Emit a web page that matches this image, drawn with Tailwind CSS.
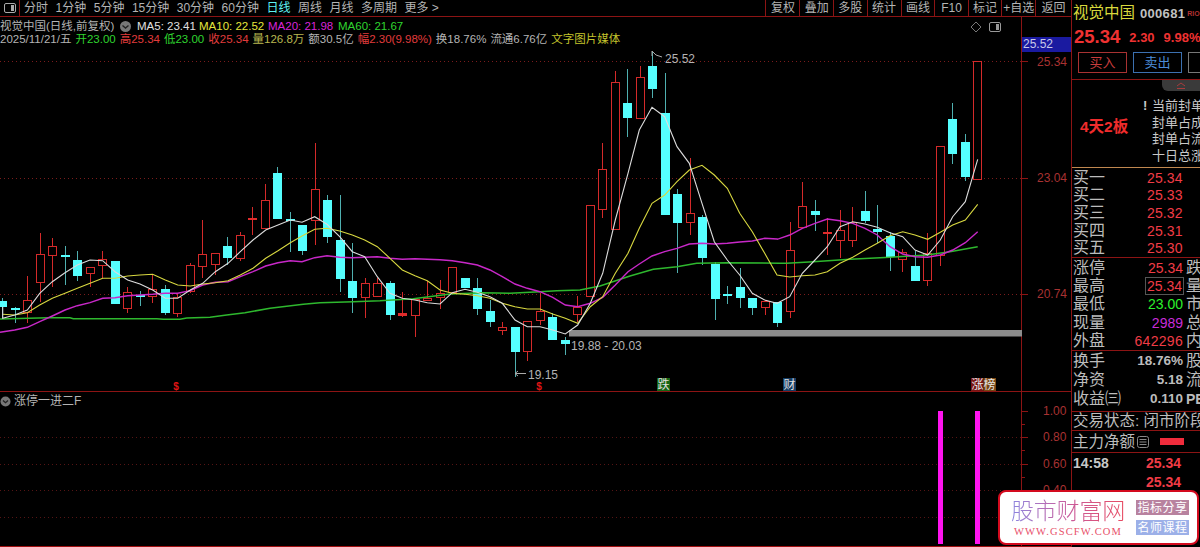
<!DOCTYPE html>
<html lang="zh">
<head>
    <meta charset="UTF-8">
    <title>视觉中国 日线</title>
    <script src="https://cdn.jsdelivr.net/npm/@tailwindcss/browser@4"></script>
</head>
<body class="bg-black">
    <div class="relative flex h-[547px] w-[1200px] overflow-hidden bg-black text-[12px] leading-none text-[#c8c8c8] font-['Liberation_Sans','Noto_Sans_CJK_SC',sans-serif]">
        <!-- Left: toolbar + charts -->
        <div class="flex w-[1071px] flex-col">
            <!-- Toolbar -->
            <div class="flex h-[17px] shrink-0 items-center justify-between border-b border-[#8c1414]">
                <div class="flex h-full items-center">
                    <div class="flex h-full w-5 items-center justify-center border-r border-[#8c1414]">
                        <svg width="12" height="10" viewBox="0 0 12 10"><rect x="0.5" y="0.5" width="11" height="9" rx="1.5" fill="none" stroke="#aaa"/><rect x="7" y="2" width="3" height="6" fill="#aaa"/></svg>
                    </div>
                    <div class="ml-1 flex items-center gap-[7.5px] text-[#b4b4b4]">
                        <span>分时</span><span>1分钟</span><span>5分钟</span><span>15分钟</span><span>30分钟</span><span>60分钟</span>
                        <span class="text-[#5ef2f2]">日线</span><span>周线</span><span>月线</span><span>多周期</span><span>更多 &gt;</span>
                    </div>
                </div>
                <div class="flex h-full items-center text-center text-[#b4b4b4]">
                    <span class="flex h-full w-[34px] items-center justify-center border-l border-[#8c1414]">复权</span>
                    <span class="flex h-full w-[33.6px] items-center justify-center border-l border-[#8c1414]">叠加</span>
                    <span class="flex h-full w-[33.6px] items-center justify-center border-l border-[#8c1414]">多股</span>
                    <span class="flex h-full w-[34px] items-center justify-center border-l border-[#8c1414]">统计</span>
                    <span class="flex h-full w-[33.6px] items-center justify-center border-l border-[#8c1414]">画线</span>
                    <span class="flex h-full w-[33.6px] items-center justify-center border-l border-[#8c1414]">F10</span>
                    <span class="flex h-full w-[33.6px] items-center justify-center border-l border-[#8c1414]">标记</span>
                    <span class="flex h-full w-[33.6px] items-center justify-center border-l border-[#8c1414]">+自选</span>
                    <span class="flex h-full w-[36px] items-center justify-center border-l border-[#8c1414]">返回</span>
                </div>
            </div>

            <!-- Price chart -->
            <div class="flex h-[375px] shrink-0 border-b border-[#8c1414]">
                <div class="relative w-[1022px] border-r border-[#8c1414]">
                    <svg id="priceChart" class="absolute inset-0" width="1022" height="374" viewBox="0 17 1022 374"></svg>
                    <div class="absolute right-[20px] top-[4px] flex items-center gap-[7px]">
                        <svg width="12" height="12" viewBox="0 0 12 12"><path d="M6 1l5 5-5 5-5-5z" fill="none" stroke="#777"/></svg>
                        <svg width="12" height="10" viewBox="0 0 12 10"><rect x="0.5" y="0.5" width="11" height="9" rx="1.5" fill="none" stroke="#999"/><rect x="7" y="2" width="3" height="6" fill="#999"/></svg>
                    </div>
                    <div class="relative pt-[3px] text-[11.5px]">
                        <div class="flex h-[13px] items-center whitespace-nowrap">
                            <span class="w-[119px] shrink-0 text-[#b4b4b4]">视觉中国(日线,前复权)</span>
                            <svg class="shrink-0" width="13" height="13" viewBox="0 0 13 13"><circle cx="6.5" cy="6.5" r="5.5" fill="#777"/><path d="M3.5 5.5l3 2.5 3-2.5" fill="none" stroke="#222" stroke-width="1.4"/></svg>
                            <span class="ml-[5px] w-[62px] text-[#e0e0e0]">MA5: 23.41</span>
                            <span class="w-[69px] text-[#e6e63c]">MA10: 22.52</span>
                            <span class="w-[70px] text-[#d824d8]">MA20: 21.98</span>
                            <span class="text-[#2fd42f]">MA60: 21.67</span>
                        </div>
                        <div class="flex h-[13px] items-center gap-[4px] whitespace-nowrap">
                            <span class="text-[#b4b4b4]">2025/11/21/五</span>
                            <span class="text-[#2fd42f]">开23.00</span>
                            <span class="text-[#e03c3c]">高25.34</span>
                            <span class="text-[#2fd42f]">低23.00</span>
                            <span class="text-[#e03c3c]">收25.34</span>
                            <span class="text-[#b8b850]">量126.8万</span>
                            <span class="text-[#b4b4b4]">额30.5亿</span>
                            <span class="text-[#e03c3c]">幅2.30(9.98%)</span>
                            <span class="text-[#b4b4b4]">换18.76%</span>
                            <span class="text-[#b4b4b4]">流通6.76亿</span>
                            <span class="text-[#c4c42c]">文字图片媒体</span>
                        </div>
                    </div>
                </div>
                <!-- Price axis -->
                <div class="relative w-[49px] text-[12px] text-[#a83232]">
                    <div class="absolute left-0 top-[20px] h-[15px] w-[49px] bg-[#1a1aa0] pl-[1px] text-[12px] leading-[15px] text-[#c8c8e8]">25.52</div>
                    <span class="absolute left-[15px] top-[39px]">25.34</span>
                    <span class="absolute left-[15px] top-[155px]">23.04</span>
                    <span class="absolute left-[15px] top-[271px]">20.74</span>
                    <span class="absolute left-0 top-[44px] h-px w-[6px] bg-[#8c1414]"></span>
                    <span class="absolute left-0 top-[161px] h-px w-[6px] bg-[#8c1414]"></span>
                    <span class="absolute left-0 top-[277px] h-px w-[6px] bg-[#8c1414]"></span>
                </div>
            </div>

            <!-- Indicator panel -->
            <div class="flex min-h-0 flex-1 border-b border-[#a01010]">
                <div class="relative w-[1022px] border-r border-[#8c1414]">
                    <svg id="lowerChart" class="absolute inset-0" width="1022" height="155" viewBox="0 392 1022 155"></svg>
                    <div class="relative flex h-[16px] items-center pt-[2px] text-[#b4b4b4]">
                        <svg width="11" height="11" viewBox="0 0 11 11"><circle cx="5.5" cy="5.5" r="5" fill="#777"/><path d="M3 4.5l2.5 2.2L8 4.5" fill="none" stroke="#222" stroke-width="1.3"/></svg>
                        <span class="ml-[3px]">涨停一进二F</span>
                    </div>
                </div>
                <div class="relative w-[49px] text-[12px] text-[#a83232]">
                    <span class="absolute left-[21px] top-[13px]">1.00</span>
                    <span class="absolute left-[21px] top-[39px]">0.80</span>
                    <span class="absolute left-[21px] top-[66px]">0.60</span>
                    <span class="absolute left-[21px] top-[92px]">0.40</span>
                    <span class="absolute left-0 top-[19px] h-px w-[6px] bg-[#8c1414]"></span>
                    <span class="absolute left-0 top-[32px] h-px w-[3px] bg-[#8c1414]"></span>
                    <span class="absolute left-0 top-[45px] h-px w-[6px] bg-[#8c1414]"></span>
                    <span class="absolute left-0 top-[58px] h-px w-[3px] bg-[#8c1414]"></span>
                    <span class="absolute left-0 top-[72px] h-px w-[6px] bg-[#8c1414]"></span>
                    <span class="absolute left-0 top-[85px] h-px w-[3px] bg-[#8c1414]"></span>
                </div>
            </div>
        </div>

        <!-- Right: quote panel -->
        <div class="flex w-[129px] flex-col overflow-hidden border-l border-[#8c1414] text-[16px] text-[#bcbcbc]">
            <div class="h-[80px] shrink-0 border-b border-[#8c1414]">
                <div class="flex h-[24px] items-center whitespace-nowrap pl-[1px] pt-[2px]">
                    <span class="shrink-0 text-[15.5px] text-[#d8d83c]">视觉中国</span>
                    <span class="ml-[5px] text-[13px] font-bold tracking-[0.3px] text-[#c0c0c0]">000681</span>
                    <span class="ml-[2px] text-[7px] font-bold text-[#b03030]">RIO</span>
                </div>
                <div class="flex h-[23px] items-center whitespace-nowrap pl-[2px] pt-[3px] font-bold text-[#f03232]">
                    <span class="text-[18.5px]">25.34</span>
                    <span class="ml-[9px] text-[13px]">2.30</span>
                    <span class="ml-[9px] text-[13px]">9.98%</span>
                </div>
                <div class="mt-[5px] flex gap-[6px] pl-[6px] text-[13px]">
                    <span class="flex h-[21px] w-[49px] shrink-0 items-center justify-center border border-[#a83232] text-[#c83c3c]">买入</span>
                    <span class="flex h-[21px] w-[49px] shrink-0 items-center justify-center border border-[#3c70b0] text-[#4c8cd8]">卖出</span>
                    <span class="h-[21px] w-[49px] shrink-0 border border-[#777]"></span>
                </div>
            </div>
            <div class="relative flex h-[88px] shrink-0 border-b border-[#c08850]">
                <div class="absolute right-0 top-0 flex h-[11px] w-[38px] items-center justify-center rounded-bl-[6px] bg-[#3a3a3a]">
                    <svg width="10" height="7" viewBox="0 0 10 7"><path d="M1 4l4-3 4 3M1 6.5h8" fill="none" stroke="#a83c3c"/></svg>
                </div>
                <span class="ml-[8px] mt-[39px] h-[18px] w-[63px] shrink-0 whitespace-nowrap text-[15.5px] font-bold text-[#f02c2c]">4天2板</span>
                <span class="mt-[19px] w-[9px] shrink-0 text-[13px] font-bold leading-[13px] text-[#c8c8c8]">!</span>
                <div class="mt-[19px] flex flex-col gap-[3px] whitespace-nowrap text-[13px] leading-[13.5px] text-[#c8c8c8]">
                    <span>当前封单额</span><span>封单占成交</span><span>封单占流通</span><span>十日总涨幅</span>
                </div>
            </div>

            <div class="grid h-[90px] shrink-0 grid-rows-5 border-b border-[#8c1414] pt-[1px]">
                <div class="flex items-center whitespace-nowrap pl-[1px]"><span class="w-[74px]">买一</span><span class="text-[14px] tracking-[0.1px] text-[#f03c46]">25.34</span></div>
                <div class="flex items-center whitespace-nowrap pl-[1px]"><span class="w-[74px]">买二</span><span class="text-[14px] tracking-[0.1px] text-[#f03c46]">25.33</span></div>
                <div class="flex items-center whitespace-nowrap pl-[1px]"><span class="w-[74px]">买三</span><span class="text-[14px] tracking-[0.1px] text-[#f03c46]">25.32</span></div>
                <div class="flex items-center whitespace-nowrap pl-[1px]"><span class="w-[74px]">买四</span><span class="text-[14px] tracking-[0.1px] text-[#f03c46]">25.31</span></div>
                <div class="flex items-center whitespace-nowrap pl-[1px]"><span class="w-[74px]">买五</span><span class="text-[14px] tracking-[0.1px] text-[#f03c46]">25.30</span></div>
            </div>

            <div class="grid h-[93px] shrink-0 grid-rows-5 border-b border-[#8c1414] pt-[1px]">
                <div class="flex items-center whitespace-nowrap pl-[1px]"><span class="w-[40px]">涨停</span><span class="w-[70px] text-right text-[14px] text-[#f03c46]">25.34</span><span class="ml-[3px]">跌</span></div>
                <div class="flex items-center whitespace-nowrap pl-[1px]"><span class="w-[40px]">最高</span><span class="flex w-[71px] justify-end"><span class="border border-[#555] px-[1px] text-[14px] leading-[16px] text-[#f03c46]">25.34</span></span><span class="ml-[2px]">量</span></div>
                <div class="flex items-center whitespace-nowrap pl-[1px]"><span class="w-[40px]">最低</span><span class="w-[70px] text-right text-[14px] text-[#2cf02c]">23.00</span><span class="ml-[3px]">市</span></div>
                <div class="flex items-center whitespace-nowrap pl-[1px]"><span class="w-[40px]">现量</span><span class="w-[70px] text-right text-[14px] text-[#c82cd8]">2989</span><span class="ml-[3px]">总</span></div>
                <div class="flex items-center whitespace-nowrap pl-[1px]"><span class="w-[40px]">外盘</span><span class="w-[70px] text-right text-[14px] tracking-[0.3px] text-[#f03c46]">642296</span><span class="ml-[3px]">内</span></div>
            </div>

            <div class="grid h-[61px] shrink-0 grid-rows-3 border-b border-[#8c1414] pb-[3px]">
                <div class="flex items-center whitespace-nowrap pl-[1px]"><span class="w-[40px]">换手</span><span class="w-[70px] text-right text-[13.5px] font-bold">18.76%</span><span class="ml-[3px]">股</span></div>
                <div class="flex items-center whitespace-nowrap pl-[1px]"><span class="w-[40px]">净资</span><span class="w-[70px] text-right text-[13.5px] font-bold">5.18</span><span class="ml-[3px]">流</span></div>
                <div class="flex items-center whitespace-nowrap pl-[1px]"><span class="w-[48px]">收益㈢</span><span class="w-[62px] text-right text-[13.5px] font-bold">0.110</span><span class="ml-[3px] text-[14px] font-bold">PE</span></div>
            </div>
            <div class="flex h-[19px] shrink-0 items-center whitespace-nowrap border-b border-[#8c1414] pl-[1px] text-[15.5px]">交易状态: 闭市阶段</div>
            <div class="flex h-[22px] shrink-0 items-center border-b border-[#8c1414] pl-[1px]">
                <span class="whitespace-nowrap text-[15.5px]">主力净额</span>
                <svg class="ml-[2px] shrink-0" width="12" height="12" viewBox="0 0 12 12"><rect x="0.5" y="0.5" width="11" height="11" rx="2" fill="none" stroke="#888"/><path d="M2.5 3.5h7M2.5 6h7M2.5 8.5h7" stroke="#888"/></svg>
                <span class="ml-[11px] h-[7px] w-[24px] shrink-0 bg-[#f02c3c]"></span>
            </div>
            <div class="flex flex-col pl-[1px] text-[14px] font-bold">
                <div class="flex h-[20px] items-center"><span class="w-[73px] text-[#c8c8c8]">14:58</span><span class="text-[#f03c46]">25.34</span></div>
                <div class="flex h-[17px] items-center"><span class="w-[73px]"></span><span class="text-[#f03c46]">25.34</span></div>
            </div>
        </div>

        <!-- Watermark logo -->
        <div class="absolute left-[998px] top-[490px] flex h-[55px] w-[201px] items-center rounded-lg border-2 border-[#d40a1e] bg-white">
            <div class="ml-[12px] flex w-[112px] flex-col items-center">
                <span class="whitespace-nowrap bg-linear-to-r from-[#8a84e0] via-[#c85a9c] to-[#e84a60] bg-clip-text text-[23px] leading-[26px] font-[200] tracking-[-0.2px] text-transparent">股市财富网</span>
                <span class="mt-[3px] whitespace-nowrap font-['Liberation_Serif',serif] text-[10.5px] tracking-[1.15px] text-[#e8506a]">WWW.GSCFW.COM</span>
            </div>
            <div class="ml-[12px] flex flex-col gap-[5px] text-[12px] tracking-[0.5px]">
                <span class="flex h-[15px] w-[53px] items-center justify-center whitespace-nowrap bg-[#b8829f] text-white">指标分享</span>
                <span class="flex h-[15px] w-[53px] items-center justify-center whitespace-nowrap bg-[#9cb0e8] text-white">名师课程</span>
            </div>
        </div>
    </div>

    <script>
        const NS = 'http://www.w3.org/2000/svg';
        const price = document.getElementById('priceChart');
        const lower = document.getElementById('lowerChart');

        function el(svg, tag, attrs, text) {
            const n = document.createElementNS(NS, tag);
            for (const k in attrs) n.setAttribute(k, attrs[k]);
            if (text) n.textContent = text;
            svg.appendChild(n);
            return n;
        }

        // dotted price levels
        [61.5, 178.5, 294.5].forEach(y => el(price, 'line', { x1: 0, x2: 1022, y1: y, y2: y, stroke: '#7a1c1c', 'stroke-dasharray': '1 3' }));
        [437.5, 464.5, 490.5, 517.5].forEach(y => el(lower, 'line', { x1: 0, x2: 1022, y1: y, y2: y, stroke: '#551414', 'stroke-dasharray': '1 3' }));

        // gray support band
        el(price, 'rect', { x: 569, y: 330, width: 453, height: 6.5, fill: '#8c8c8c' });

        // type, body top, body bottom, wick top, wick bottom (one row per day)
        const candles = [
            ['c',301,307,298,318],['c',308,310,307,323],['r',300,313,276,323],['r',254,283,233,302],['r',246,256,238,287],
            ['c',255,257,246,285],['c',260,276,251,281],['r',267,274,267,287],['r',259,266,251,278],['c',261,304,261,304],
            ['r',292,309,287,313],['c',295,297,291,306],['r',289,297,275,303],['c',289,313,285,315],['r',297,314,293,317],
            ['r',265,292,263,293],['r',254,267,220,278],['r',253,265,253,275],['c',246,258,237,265],['r',235,259,232,261],
            ['d',218,220,207,235],['r',200,229,184,229],['c',173,219,167,219],['c',219,221,212,252],['c',225,251,225,255],
            ['r',189,221,143,245],['c',200,237,195,243],['c',240,279,195,292],['c',281,298,243,313],['r',283,298,278,318],
            ['r',283,297,278,297],['c',283,315,281,320],['d',313,316,292,317],['r',299,316,298,337],['r',298,301,281,301],
            ['r',293,298,280,309],['r',267,293,267,293],['c',278,288,278,288],['c',288,309,278,315],['c',311,322,300,327],
            ['r',327,331,322,335],['c',327,352,327,377],['r',321,352,321,361],['r',311,321,293,325],['c',317,340,313,340],
            ['c',340,344,337,355],['r',307,315,296,322],['r',205,297,205,297],['r',169,210,143,218],['r',82,230,71,230],
            ['c',103,118,69,137],['r',77,119,66,119],['c',66,89,52,98],['c',113,215,73,215],['c',194,223,189,273],
            ['r',213,223,158,235],['c',217,258,215,265],['c',264,299,262,320],['c',294,296,286,304],['c',287,298,268,308],
            ['c',298,308,298,315],['r',301,308,300,315],['c',302,323,302,327],['r',250,312,222,318],['r',206,228,182,228],
            ['c',211,215,200,231],['d',232,234,218,255],['r',230,241,210,258],['r',222,241,207,247],['c',211,221,191,223],
            ['c',229,232,205,243],['c',236,257,232,271],['r',252,260,249,272],['c',266,281,251,281],['r',253,281,233,286],
            ['r',146,256,146,266],['c',119,154,103,164],['c',142,177,134,181],['r',61,180,61,180]
        ];

        candles.forEach((c, i) => {
            const [t, top, bot, wTop, wBot] = c;
            const cx = Math.floor(2.5 + 12.5 * i);
            const red = t !== 'c';
            el(price, 'line', { x1: cx + .5, x2: cx + .5, y1: wTop, y2: wBot, stroke: red ? '#d42a2a' : '#4fb0b0' });
            if (t === 'c') el(price, 'rect', { x: cx - 4, y: top, width: 9, height: bot - top, fill: '#55ffff' });
            else if (t === 'd') el(price, 'rect', { x: cx - 4, y: top, width: 9, height: bot - top, fill: '#e02c2c' });
            else el(price, 'rect', { x: cx - 3.5, y: top + .5, width: 8, height: bot - top - 1, fill: '#000', stroke: '#d42a2a' });
        });

        // MA lines, written as [x, y] pairs read from enlarged views: origin and 3x scale per stretch
        function stretch(ox, oy, pts) {
            const out = [];
            for (let i = 0; i < pts.length; i += 2) out.push((ox + pts[i] / 3).toFixed(1) + ',' + (oy + pts[i + 1] / 3).toFixed(1));
            return out;
        }
        function ma(color, width, parts) {
            el(price, 'polyline', { points: parts.flat().join(' '), fill: 'none', stroke: color, 'stroke-width': width });
        }

        ma('#2eb82e', 1.5, [
            stretch(0, 130, [0,567,145,563,210,563,220,566,470,566,490,568,540,568,560,564,630,562,680,555,735,548,810,535]),
            stretch(270, 130, [100,523,150,518,250,515,330,512,430,506,500,497,540,492,640,488,720,490,810,485]),
            stretch(540, 40, [50,752,120,750,180,738,270,708,340,688,411,680,470,670,560,668,720,670]),
            stretch(770, 50, [50,640,130,635,240,628,360,622,470,615,540,605,623,590])
        ]);
        ma('#c828c8', 1.4, [
            stretch(0, 130, [0,607,44,600,82,592,119,575,157,558,195,540,232,527,270,518,308,505,345,503,383,497,420,495,458,493,496,490,533,490,571,482,608,465,646,457,684,455,721,440,759,425,797,408]),
            stretch(270, 130, [24,398,61,392,96,395,134,383,171,377,209,382,247,383,284,382,322,380,360,385,397,388,435,386,472,388,510,389,547,392,585,398,622,405,660,420,697,440,735,462,772,475,810,485]),
            stretch(540, 40, [38,772,76,795,113,800,151,790,188,772,226,735,264,695,298,672,336,648,374,635,411,625,448,612,486,610,523,612,562,610,599,606,637,603,674,595,711,597]),
            stretch(770, 50, [22,568,59,555,97,535,135,520,172,507,210,512,248,520,285,535,322,555,360,590,398,612,435,620,473,622,511,615,548,600,586,578,623,545])
        ]);
        ma('#d8d840', 1.1, [
            stretch(0, 130, [8,553,44,555,82,548,119,525,157,505,195,490,232,475,270,460,308,445,345,445,383,438,420,435,458,433,496,450,533,465,571,468,608,462,646,458,684,452,721,435,759,415,797,385]),
            stretch(270, 130, [24,362,61,338,96,318,134,298,171,295,209,303,247,315,284,330,322,350,360,385,397,420,435,437,472,452,510,480,547,490,585,493,622,497,660,505,697,520,735,530,772,537,810,537]),
            stretch(540, 40, [38,822,76,835,113,850,151,800,188,770,226,700,264,640,298,565,336,490,374,465,411,425,448,390,486,376,523,405,562,445,599,520,637,575,674,640,711,705]),
            stretch(770, 50, [59,681,97,677,135,675,172,665,210,640,248,622,285,600,322,580,360,557,398,545,435,555,473,568,511,547,548,525,586,510,623,463])
        ]);
        ma('#dcdcdc', 1.1, [
            stretch(0, 130, [8,530,8,565,44,555,82,540,119,490,157,455,195,428,232,405,270,390,308,392,345,425,383,450,420,462,458,480,496,505,533,505,571,480,608,460,646,425,684,400,721,365,759,330,797,300]),
            stretch(270, 130, [24,285,61,270,96,277,134,260,171,283,209,320,247,365,284,380,322,440,360,490,397,505,435,510,472,518,510,522,547,488,585,478,622,487,660,500,697,520,735,570,772,590,810,590]),
            stretch(540, 40, [38,870,76,882,113,855,151,790,188,700,226,540,264,400,298,270,336,202,374,230,411,320,448,370,486,490,523,605,562,660,599,705,637,760,674,780,711,790]),
            stretch(770, 50, [59,740,97,670,135,630,172,590,210,530,248,515,285,522,322,532,360,548,398,560,435,600,473,615,511,570,548,500,586,455,623,328])
        ]);

        // high / low annotations
        el(price, 'polyline', { points: '662,57 656,55 652,51 652,56', fill: 'none', stroke: '#aaa' });
        el(price, 'text', { x: 665, y: 62.5, fill: '#b4b4b4', 'font-size': 12 }, '25.52');
        el(price, 'path', { d: 'M526 373.5H515M518 371l-3 2.5 3 2.5', fill: 'none', stroke: '#aaa' });
        el(price, 'text', { x: 528, y: 379, fill: '#b4b4b4', 'font-size': 12 }, '19.15');
        el(price, 'text', { x: 571, y: 350, fill: '#b4b4b4', 'font-size': 12 }, '19.88 - 20.03');

        // event markers along the bottom of the price chart
        [176, 539].forEach(x => el(price, 'text', { x: x, y: 390, fill: '#e01414', 'font-size': 10, 'font-weight': 'bold', 'text-anchor': 'middle' }, '$'));
        el(price, 'rect', { x: 657, y: 378, width: 13, height: 13, fill: '#146414' });
        el(price, 'text', { x: 663.5, y: 389, fill: '#e0e0e0', 'font-size': 12, 'text-anchor': 'middle' }, '跌');
        el(price, 'rect', { x: 783, y: 378, width: 13, height: 13, fill: '#143c64' });
        el(price, 'text', { x: 789.5, y: 389, fill: '#e0e0e0', 'font-size': 12, 'text-anchor': 'middle' }, '财');
        el(price, 'rect', { x: 971, y: 378, width: 12.5, height: 13, fill: '#781414' });
        el(price, 'rect', { x: 983.5, y: 378, width: 12.5, height: 13, fill: '#784614' });
        el(price, 'text', { x: 983.5, y: 389, fill: '#e8e8e8', 'font-size': 12, 'text-anchor': 'middle' }, '涨榜');

        // indicator signal bars
        [938, 975].forEach(x => el(lower, 'rect', { x: x, y: 411, width: 5, height: 133, fill: '#ff14f0' }));
    </script>
</body>
</html>
